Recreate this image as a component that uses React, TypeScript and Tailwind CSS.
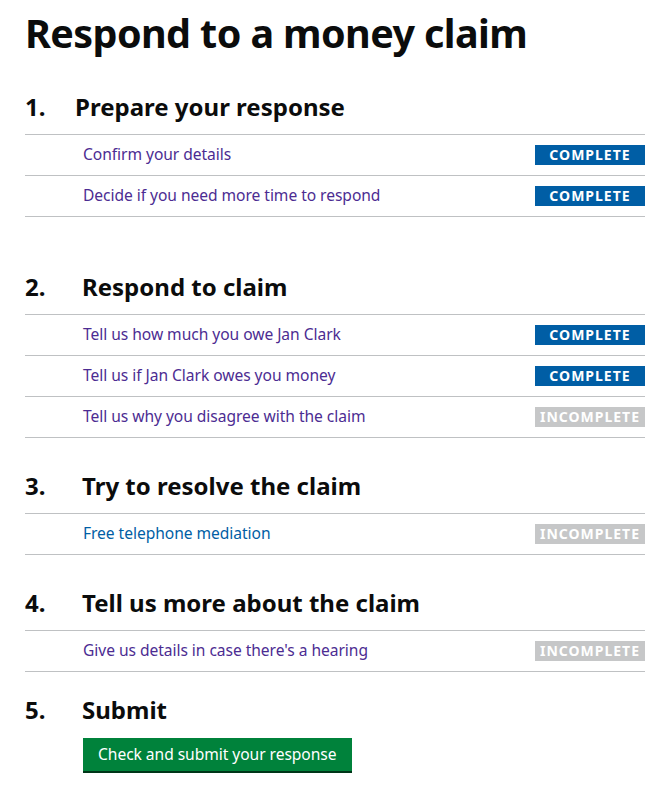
import React from "react";

type Task = { label: string; status: "complete" | "incomplete"; visited?: boolean };
type Section = { num: string; title: string; tasks?: Task[]; numW: string; mt: string };

function Badge({ status }: { status: "complete" | "incomplete" }) {
  if (status === "complete") {
    return (
      <span className="flex h-[20px] w-[110px] items-center justify-center bg-[#005ea5] text-[14px] font-bold leading-none tracking-[1px] text-white">
        COMPLETE
      </span>
    );
  }
  return (
    <span className="flex h-[20px] w-[110px] items-center justify-center bg-[#c6c7c8] text-[14px] font-bold leading-none tracking-[1px] text-white">
      INCOMPLETE
    </span>
  );
}

function TaskRow({ task }: { task: Task }) {
  return (
    <li className="flex h-[41px] items-center justify-between border-b border-[#bfc1c3] pl-[58px]">
      <a
        href="#"
        className={
          task.visited === false
            ? "text-[15.6px] leading-none tracking-[-0.05px] text-[#005ea5]"
            : "text-[15.6px] leading-none tracking-[-0.05px] text-[#4c2c92]"
        }
      >
        {task.label}
      </a>
      <Badge status={task.status} />
    </li>
  );
}

function SectionHeading({ num, title, numW }: { num: string; title: string; numW: string }) {
  return (
    <h2 className="flex text-[24px] font-bold leading-[30px] text-[#0b0c0c]">
      <span className={numW}>{num}</span>
      <span>{title}</span>
    </h2>
  );
}

export default function App() {
  const sections: Section[] = [
    {
      num: "1.",
      title: "Prepare your response",
      numW: "w-[50px]",
      mt: "mt-0",
      tasks: [
        { label: "Confirm your details", status: "complete" },
        { label: "Decide if you need more time to respond", status: "complete" },
      ],
    },
    {
      num: "2.",
      title: "Respond to claim",
      numW: "w-[57px]",
      mt: "mt-[55px]",
      tasks: [
        { label: "Tell us how much you owe Jan Clark", status: "complete" },
        { label: "Tell us if Jan Clark owes you money", status: "complete" },
        { label: "Tell us why you disagree with the claim", status: "incomplete" },
      ],
    },
    {
      num: "3.",
      title: "Try to resolve the claim",
      numW: "w-[57px]",
      mt: "mt-[33px]",
      tasks: [{ label: "Free telephone mediation", status: "incomplete", visited: false }],
    },
    {
      num: "4.",
      title: "Tell us more about the claim",
      numW: "w-[57px]",
      mt: "mt-[33px]",
      tasks: [{ label: "Give us details in case there's a hearing", status: "incomplete" }],
    },
  ];

  return (
    <div
      className="min-h-[788px] w-[663px] bg-white pl-[25px] pr-[18px] pt-[9px] text-[#0b0c0c]"
      style={{ fontFamily: '"Noto Sans", "Liberation Sans", sans-serif' }}
    >
      <h1 className="mb-[35px] text-[39.5px] font-bold leading-[48px] tracking-[-0.6px]">
        Respond to a money claim
      </h1>
      {sections.map((s) => (
        <section key={s.num} className={s.mt}>
          <div className="mb-[12px]">
            <SectionHeading num={s.num} title={s.title} numW={s.numW} />
          </div>
          <ul className="border-t border-[#bfc1c3]">
            {s.tasks!.map((t) => (
              <TaskRow key={t.label} task={t} />
            ))}
          </ul>
        </section>
      ))}
      <section className="mt-[23px]">
        <div className="mb-[13px]">
          <SectionHeading num="5." title="Submit" numW="w-[57px]" />
        </div>
        <div className="pl-[58px]">
          <button className="h-[33px] bg-[#00823b] px-[15px] text-[15.6px] leading-none tracking-[-0.05px] text-white shadow-[0_2px_0_#003618]">
            Check and submit your response
          </button>
        </div>
      </section>
    </div>
  );
}
